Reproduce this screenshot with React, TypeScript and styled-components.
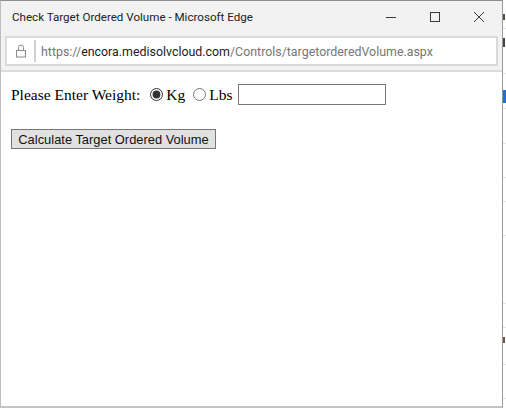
import styled, { createGlobalStyle } from "styled-components";

const GlobalStyle = createGlobalStyle`
  html, body {
    margin: 0;
    padding: 0;
    background: #fff;
  }
  body {
    width: 506px;
    height: 411px;
    overflow: hidden;
  }
`;

const Desktop = styled.div`
  display: flex;
  width: 506px;
  height: 411px;
  background: #fff;
`;

const Popup = styled.div`
  display: flex;
  flex-direction: column;
  box-sizing: border-box;
  width: 503px;
  height: 408px;
  flex: none;
  border-top: 1px solid #8e8e8e;
  border-right: 1px solid #9a9a9a;
  border-bottom: 2px solid #c4c4c4;
  border-left: 1px solid #bdbdbd;
  background: #fff;
`;

const TitleBar = styled.div`
  display: flex;
  align-items: center;
  justify-content: space-between;
  height: 35px;
  flex: none;
  box-sizing: border-box;
  padding: 0 0 3px 11px;
  background: #f2f2f2;
`;

const Title = styled.span`
  font: 11.6px Roboto, "Open Sans", sans-serif;
  color: #222;
`;

const WindowControls = styled.div`
  display: flex;
  align-items: center;
  padding-right: 1px;
`;

const WindowButton = styled.span`
  display: flex;
  align-items: center;
  justify-content: center;
  width: 44px;
  height: 32px;
  color: #3a3a3a;
`;

const AddressWrap = styled.div`
  flex: none;
  height: 36px;
  box-sizing: border-box;
  padding: 0 4px 0 4px;
  background: #f2f2f2;
  border-bottom: 2px solid #dcdcdc;
`;

const AddressBar = styled.div`
  display: flex;
  align-items: center;
  height: 30px;
  box-sizing: border-box;
  border: 2px solid #dadada;
  background: #fff;
`;

const LockSlot = styled.span`
  display: flex;
  align-items: center;
  justify-content: center;
  width: 27px;
  height: 22px;
  border-right: 2px solid #d0d0d0;
  color: #8a8a8a;
`;

const Url = styled.span`
  padding-left: 5px;
  font: 12.4px Roboto, "Open Sans", sans-serif;
  color: #767676;
  white-space: nowrap;
`;

const Host = styled.span`
  color: #1c1c1c;
`;

const Page = styled.div`
  flex: 1;
  padding: 12px 10px;
  font: 15.5px "Liberation Serif", serif;
  color: #000;
`;

const WeightRow = styled.div`
  display: flex;
  align-items: center;
  height: 21px;
`;

const WeightLabel = styled.span`
  margin-right: 10px;
`;

const UnitLabel = styled.label`
  display: flex;
  align-items: center;
  margin-right: 8px;

  & + & {
    margin-right: 5px;
  }
`;

const Radio = styled.input.attrs({ type: "radio" })`
  width: 13px;
  height: 13px;
  margin: 0 3px 0 0;
  accent-color: #333;
`;

const WeightInput = styled.input.attrs({ type: "text" })`
  box-sizing: border-box;
  width: 148px;
  height: 21px;
  border: 1px solid #777;
  border-radius: 0;
  padding: 0;
  background: #fff;
`;

const CalcButton = styled.button`
  display: block;
  box-sizing: border-box;
  width: 205px;
  height: 20px;
  margin-top: 24px;
  padding: 0;
  border: 1px solid #767676;
  border-radius: 0;
  background: #e1e1e1;
  font: 12.9px "Liberation Sans", sans-serif;
  color: #111;
  white-space: nowrap;
`;

// sliver of the page behind the popup, seen at the right edge
const Backdrop = styled.div`
  flex: 1;
  height: 411px;
  overflow: hidden;
  background: #fff;
`;

const BackdropRow = styled.div<{ $height: number }>`
  display: flow-root;
  box-sizing: border-box;
  height: ${(p) => p.$height}px;
  border-bottom: 1px solid #e2e2e2;
`;

const Sliver = styled.span<{ $color: string; $height: number; $width: number; $top: number }>`
  display: block;
  width: ${(p) => p.$width}px;
  height: ${(p) => p.$height}px;
  margin-top: ${(p) => p.$top}px;
  background: ${(p) => p.$color};
`;

type SliverData = { color: string; height: number; width: number; top: number };

const backdropRows: { height: number; sliver?: SliverData }[] = [
  { height: 29, sliver: { color: "#5a4a3a", height: 6, width: 2, top: 14 } },
  { height: 45, sliver: { color: "#444", height: 9, width: 2, top: 9 } },
  { height: 35, sliver: { color: "#1a73d0", height: 13, width: 3, top: 16 } },
  { height: 35 },
  { height: 34 },
  { height: 24 },
  { height: 34 },
  { height: 68 },
  { height: 24 },
  { height: 37, sliver: { color: "#6a5a4a", height: 6, width: 2, top: 9 } },
  { height: 34 },
];

const LockIcon = () => (
  <svg width="12" height="14" viewBox="0 0 12 14" fill="none" stroke="currentColor" strokeWidth="1">
    <rect x="1.5" y="6.5" width="9" height="6.5" />
    <path d="M3.5 6.5V3.5a2.5 2.5 0 0 1 5 0v3" />
  </svg>
);

const MinimizeIcon = () => (
  <svg width="12" height="12" viewBox="0 0 12 12" stroke="currentColor" strokeWidth="1">
    <path d="M1 6.5h10" />
  </svg>
);

const MaximizeIcon = () => (
  <svg width="12" height="12" viewBox="0 0 12 12" fill="none" stroke="currentColor" strokeWidth="1">
    <rect x="1.5" y="1.5" width="9" height="9" />
  </svg>
);

const CloseIcon = () => (
  <svg width="12" height="12" viewBox="0 0 12 12" stroke="currentColor" strokeWidth="1">
    <path d="M1 1l10 10M11 1L1 11" />
  </svg>
);

export default function App() {
  return (
    <Desktop>
      <GlobalStyle />
      <Popup>
        <TitleBar>
          <Title>Check Target Ordered Volume - Microsoft Edge</Title>
          <WindowControls>
            <WindowButton><MinimizeIcon /></WindowButton>
            <WindowButton><MaximizeIcon /></WindowButton>
            <WindowButton><CloseIcon /></WindowButton>
          </WindowControls>
        </TitleBar>
        <AddressWrap>
          <AddressBar>
            <LockSlot><LockIcon /></LockSlot>
            <Url>
              https://<Host>encora.medisolvcloud.com</Host>/Controls/targetorderedVolume.aspx
            </Url>
          </AddressBar>
        </AddressWrap>
        <Page>
          <WeightRow>
            <WeightLabel>Please Enter Weight:</WeightLabel>
            <UnitLabel><Radio name="unit" defaultChecked />Kg</UnitLabel>
            <UnitLabel><Radio name="unit" />Lbs</UnitLabel>
            <WeightInput />
          </WeightRow>
          <CalcButton>Calculate Target Ordered Volume</CalcButton>
        </Page>
      </Popup>
      <Backdrop>
        {backdropRows.map((row, i) => (
          <BackdropRow key={i} $height={row.height}>
            {row.sliver && (
              <Sliver
                $color={row.sliver.color}
                $height={row.sliver.height}
                $width={row.sliver.width}
                $top={row.sliver.top}
              />
            )}
          </BackdropRow>
        ))}
      </Backdrop>
    </Desktop>
  );
}
